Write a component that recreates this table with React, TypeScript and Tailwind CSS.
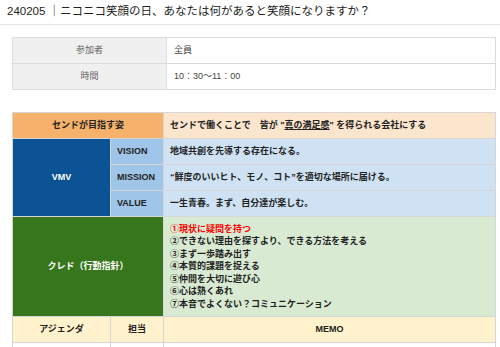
import React from "react";

const font = { fontFamily: '"Liberation Sans", "Noto Sans CJK JP", sans-serif' };

export default function App() {
  return (
    <div className="w-[500px] h-[347px] overflow-hidden bg-white text-[#333]" style={font}>
      <div className="h-[25px] border-b border-[#e5e5e5] pl-[7px] flex items-center text-[11.5px] text-[#222]">
        240205 ｜ニコニコ笑顔の日、あなたは何があると笑顔になりますか？
      </div>

      <div className="ml-[12px] mt-[12px] w-[484px] bg-[#dcdcdc] p-px grid grid-cols-[153px_1fr] gap-px text-[9px]">
        <div className="h-[25px] bg-[#f0f0f0] flex items-center justify-center text-[#666]">参加者</div>
        <div className="h-[25px] bg-white flex items-center pl-[7px] text-[#444]">全員</div>
        <div className="h-[25px] bg-[#f0f0f0] flex items-center justify-center text-[#666]">時間</div>
        <div className="h-[25px] bg-white flex items-center pl-[7px] text-[#444]">10：30〜11：00</div>
      </div>

      <div className="ml-[12px] mt-[22px] w-[484px] bg-[#d6d6d6] p-px grid grid-cols-[97px_52px_1fr] grid-rows-[25px_25px_25px_25px_99px_25px_25px] gap-px text-[9px] font-bold text-[#222]">
        <div className="col-span-2 bg-[#f6b26b] flex items-center justify-center">センドが目指す姿</div>
        <div className="bg-[#fce5cd] flex items-center pl-[6px]">
          センドで働くことで　皆が "<span className="underline">真の満足感</span>" を得られる会社にする
        </div>

        <div className="row-span-3 bg-[#0b5394] text-white flex items-center justify-center">VMV</div>
        <div className="bg-[#9fc5e8] flex items-center pl-[6px]">VISION</div>
        <div className="bg-[#cfe2f3] flex items-center pl-[6px]">地域共創を先導する存在になる。</div>
        <div className="bg-[#9fc5e8] flex items-center pl-[6px]">MISSION</div>
        <div className="bg-[#cfe2f3] flex items-center pl-[6px]">“鮮度のいいヒト、モノ、コト”を適切な場所に届ける。</div>
        <div className="bg-[#9fc5e8] flex items-center pl-[6px]">VALUE</div>
        <div className="bg-[#cfe2f3] flex items-center pl-[6px]">一生青春。まず、自分達が楽しむ。</div>

        <div className="col-span-2 bg-[#38761d] text-white flex items-center justify-center">クレド（行動指針）</div>
        <div className="bg-[#d9ead3] flex flex-col justify-center pl-[6px] leading-[12.5px]">
          <div className="text-[#ff0000]">①現状に疑問を持つ</div>
          <div>②できない理由を探すより、できる方法を考える</div>
          <div>③まず一歩踏み出す</div>
          <div>④本質的課題を捉える</div>
          <div>⑤仲間を大切に遊び心</div>
          <div>⑥心は熱くあれ</div>
          <div>⑦本音でよくない？コミュニケーション</div>
        </div>

        <div className="bg-[#fff2cc] flex items-center justify-center">アジェンダ</div>
        <div className="bg-[#fff2cc] flex items-center justify-center">担当</div>
        <div className="bg-[#fff2cc] flex items-center justify-center">MEMO</div>

        <div className="bg-white"></div>
        <div className="bg-white"></div>
        <div className="bg-white"></div>
      </div>
    </div>
  );
}
